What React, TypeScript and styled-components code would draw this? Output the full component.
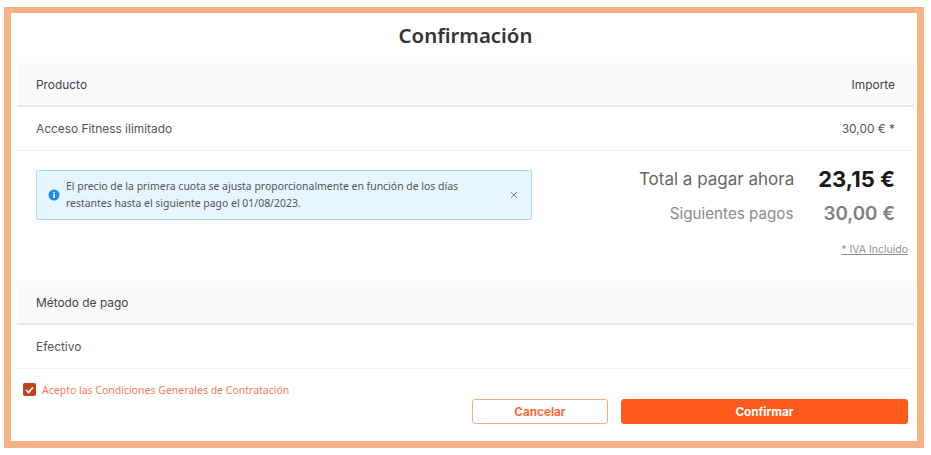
import styled, { createGlobalStyle } from 'styled-components'

const GlobalStyle = createGlobalStyle`
  html, body {
    margin: 0;
    padding: 0;
    background: #fff;
  }
  * {
    box-sizing: border-box;
  }
`

const sans = `Inter, "Noto Sans", "Liberation Sans", sans-serif`
const plain = `"Noto Sans", "Open Sans", "Liberation Sans", sans-serif`

const Frame = styled.div`
  width: 920px;
  height: 441px;
  margin: 7px 0 0 4px;
  border: 7px solid #f6b185;
  border-top-width: 6px;
  background: #fff;
  display: flex;
  flex-direction: column;
  padding: 0 3px 0 6px;
`

const Title = styled.h1`
  margin: 0;
  height: 50px;
  flex: none;
  padding-bottom: 6px;
  display: flex;
  align-items: center;
  justify-content: center;
  font-family: ${plain};
  font-size: 20.4px;
  font-weight: 600;
  color: #333;
`

const HeadRow = styled.div`
  height: 44px;
  flex: none;
  background: #fafafa;
  border-bottom: 2px solid #e8e8e8;
  display: flex;
  align-items: center;
  justify-content: space-between;
  padding: 0 19px;
  font-family: ${sans};
  font-size: 11.9px;
  color: #444;
`

const BodyRow = styled.div`
  height: 44px;
  flex: none;
  border-bottom: 1px solid #f0f0f0;
  display: flex;
  align-items: center;
  justify-content: space-between;
  padding: 0 19px;
  font-family: ${sans};
  font-size: 11.9px;
  color: #555;
`

const Summary = styled.div`
  height: 130px;
  flex: none;
  display: flex;
  justify-content: space-between;
  padding: 19px 6px 0 19px;
`

const Alert = styled.div`
  width: 496px;
  height: 50px;
  background: #e6f6fe;
  border: 1px solid #a6dcf7;
  border-radius: 2px;
  display: flex;
  align-items: center;
  padding: 0 11px;
  gap: 6px;
  font-family: ${plain};
  font-size: 10.45px;
  line-height: 17px;
  color: #555;
`

const AlertText = styled.div`
  flex: 1;
`

const CloseIcon = styled.svg`
  width: 8px;
  height: 8px;
  margin-right: 2px;
  flex: none;
`

const Totals = styled.div`
  display: flex;
  flex-direction: column;
  align-items: flex-end;
  margin-top: -8px;
`

const TotalLine = styled.div<{ $muted?: boolean }>`
  display: flex;
  align-items: center;
  justify-content: flex-end;
  height: 34px;
  margin-right: 13px;
  gap: ${(p) => (p.$muted ? 30 : 24)}px;
  font-family: ${sans};
  font-size: ${(p) => (p.$muted ? 15.2 : 17)}px;
  color: ${(p) => (p.$muted ? '#8a8a8a' : '#666')};
`

const Amount = styled.span<{ $muted?: boolean }>`
  font-size: ${(p) => (p.$muted ? 18.8 : 22)}px;
  font-weight: ${(p) => (p.$muted ? 600 : 700)};
  color: ${(p) => (p.$muted ? '#808080' : '#1a1a1a')};
`

const VatNote = styled.a`
  margin-top: 13px;
  font-family: ${sans};
  font-size: 10.5px;
  color: #8f8f8f;
  text-decoration: underline;
`

const Footer = styled.div`
  flex: 1;
  display: flex;
  justify-content: space-between;
  padding: 14px 6px 0 6px;
`

const Consent = styled.label`
  display: flex;
  align-items: flex-start;
  gap: 6px;
  font-family: ${plain};
  font-size: 10.5px;
  line-height: 14px;
  color: #fb7a55;
`

const CheckBox = styled.span`
  width: 13px;
  height: 13px;
  border-radius: 2px;
  background: #c0431c;
  display: flex;
  align-items: center;
  justify-content: center;
`

const Actions = styled.div`
  display: flex;
  gap: 13px;
  padding-top: 16px;
`

const Button = styled.button<{ $primary?: boolean }>`
  height: 25px;
  width: ${(p) => (p.$primary ? 287 : 136)}px;
  border-radius: 3px;
  border: 1px solid ${(p) => (p.$primary ? '#fd5a1e' : '#ffa58a')};
  background: ${(p) => (p.$primary ? '#fd5a1e' : '#fff')};
  color: ${(p) => (p.$primary ? '#fff' : '#fd6a3a')};
  font-family: ${sans};
  font-size: 11.7px;
  font-weight: 700;
  padding: 0;
`

const App = () => {
  return (
    <>
      <GlobalStyle />
      <Frame>
        <Title>Confirmación</Title>
        <HeadRow>
          <span>Producto</span>
          <span>Importe</span>
        </HeadRow>
        <BodyRow>
          <span>Acceso Fitness ilimitado</span>
          <span>30,00 € *</span>
        </BodyRow>
        <Summary>
          <Alert>
            <svg width="12" height="12" viewBox="0 0 12 12">
              <circle cx="6" cy="6" r="5.5" fill="#1d8cf0" />
              <rect x="5.2" y="5" width="1.6" height="4" fill="#fff" />
              <rect x="5.2" y="2.9" width="1.6" height="1.4" fill="#fff" />
            </svg>
            <AlertText>
              El precio de la primera cuota se ajusta proporcionalmente en función de los días
              <br />
              restantes hasta el siguiente pago el 01/08/2023.
            </AlertText>
            <CloseIcon viewBox="0 0 8 8">
              <path d="M1 1l6 6M7 1l-6 6" stroke="#8c8c8c" strokeWidth="1" fill="none" />
            </CloseIcon>
          </Alert>
          <Totals>
            <TotalLine>
              Total a pagar ahora
              <Amount>23,15 €</Amount>
            </TotalLine>
            <TotalLine $muted>
              Siguientes pagos
              <Amount $muted>30,00 €</Amount>
            </TotalLine>
            <VatNote>* IVA Incluido</VatNote>
          </Totals>
        </Summary>
        <HeadRow>
          <span>Método de pago</span>
        </HeadRow>
        <BodyRow>
          <span>Efectivo</span>
        </BodyRow>
        <Footer>
          <Consent>
            <CheckBox>
              <svg width="9" height="8" viewBox="0 0 9 8">
                <path d="M1 4l2.4 2.4L8 1.4" stroke="#fff" strokeWidth="1.7" fill="none" />
              </svg>
            </CheckBox>
            Acepto las Condiciones Generales de Contratación
          </Consent>
          <Actions>
            <Button>Cancelar</Button>
            <Button $primary>Confirmar</Button>
          </Actions>
        </Footer>
      </Frame>
    </>
  )
}

export default App
